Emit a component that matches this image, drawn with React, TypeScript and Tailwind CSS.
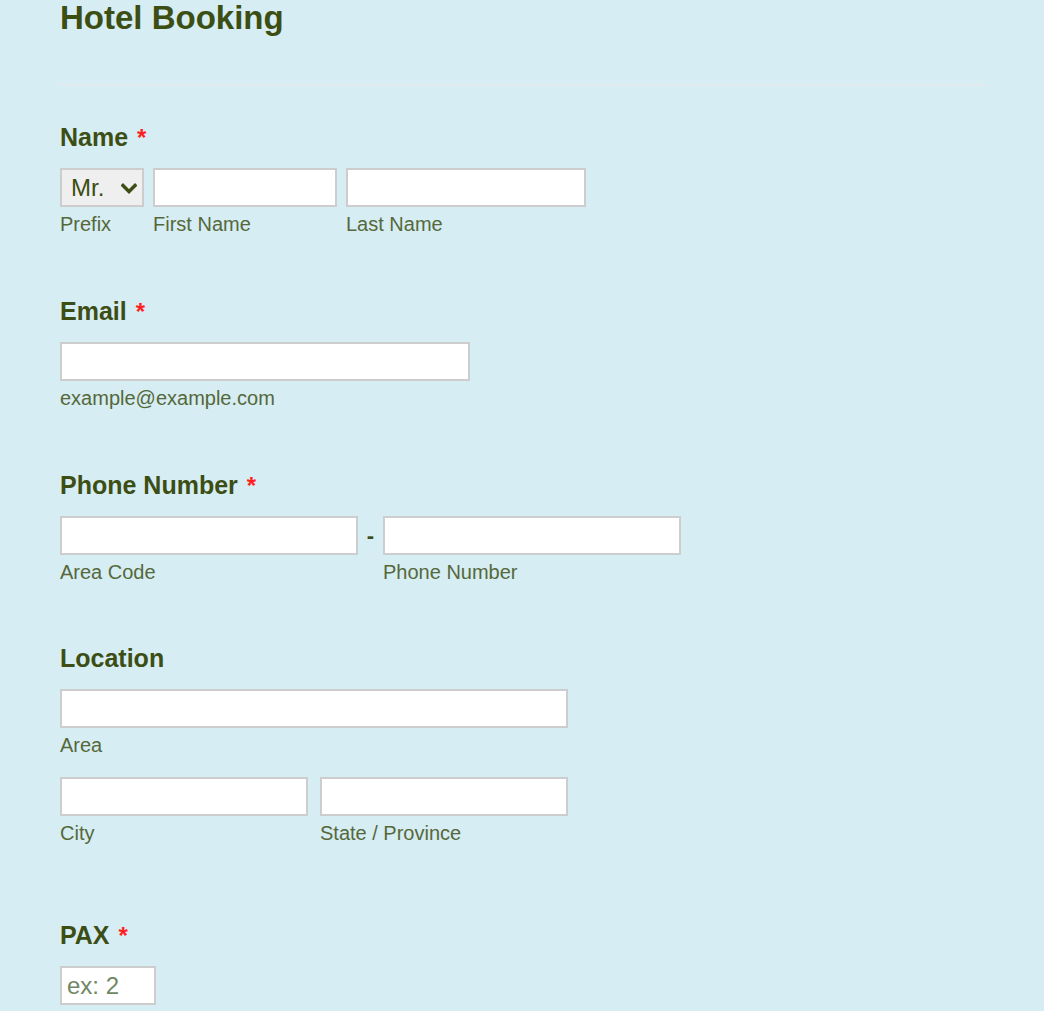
import { ReactNode } from "react";

const font = "font-['Liberation_Sans',Arial,sans-serif]";

const Label = ({ children, required }: { children: ReactNode; required?: boolean }) => (
  <div className="text-[25px] leading-[30px] font-bold text-[#3c4e14] whitespace-nowrap">
    {children}
    {required && <span className="text-[#ff1f1f] text-[24px] ml-[9px] align-top relative top-[1px]">*</span>}
  </div>
);

const Sub = ({ children }: { children: ReactNode }) => (
  <div className="mt-[5px] text-[20px] leading-[24px] text-[#56683a] whitespace-nowrap">{children}</div>
);

const Box = ({ className, placeholder }: { className: string; placeholder?: string }) => (
  <input
    placeholder={placeholder}
    className={`h-[39px] bg-white border-2 border-[#cdcdcd] px-[5px] text-[24px] text-[#3c4e14] placeholder:text-[#6f8763] outline-none ${className}`}
  />
);

const Field = ({ w, label, children }: { w: string; label: string; children?: ReactNode }) => (
  <div className={`flex flex-col ${w}`}>
    {children ?? <Box className="w-full" />}
    <Sub>{label}</Sub>
  </div>
);

export default function App() {
  return (
    <div className={`min-h-[1011px] w-full bg-[#d5edf3] ${font} overflow-hidden`}>
      <div className="pl-[60px] pr-[59px]">
        <h1 className="text-[33px] leading-[36px] font-bold text-[#3c4e14]">Hotel Booking</h1>
        <div className="mt-[48px] -ml-[2px] h-[2px] bg-[#e3eaed]" />

        {/* Name */}
        <div className="mt-[36px]">
          <Label required>Name</Label>
          <div className="mt-[16px] flex gap-[9px]">
            <Field w="w-[84px]" label="Prefix">
              <div className="h-[39px] bg-[#efefef] border-2 border-[#cdcdcd] flex items-center justify-between pl-[9px] pr-[5px]">
                <span className="text-[24px] text-[#3c4e14]">Mr.</span>
                <svg width="16" height="11" viewBox="0 0 16 11" className="mt-[2px]">
                  <path d="M2 2.5 L8 8.5 L14 2.5" fill="none" stroke="#3c4e14" strokeWidth="3.4" strokeLinecap="square" />
                </svg>
              </div>
            </Field>
            <Field w="w-[184px]" label="First Name" />
            <Field w="w-[240px]" label="Last Name" />
          </div>
        </div>

        {/* Email */}
        <div className="mt-[60px]">
          <Label required>Email</Label>
          <div className="mt-[16px]">
            <Field w="w-[410px]" label="example@example.com" />
          </div>
        </div>

        {/* Phone */}
        <div className="mt-[60px]">
          <Label required>Phone Number</Label>
          <div className="mt-[16px] flex">
            <Field w="w-[298px]" label="Area Code" />
            <div className="w-[25px] h-[39px] flex items-center justify-center text-[22px] font-bold text-[#3c4e14]">-</div>
            <Field w="w-[298px]" label="Phone Number" />
          </div>
        </div>

        {/* Location */}
        <div className="mt-[59px]">
          <Label>Location</Label>
          <div className="mt-[16px]">
            <Field w="w-[508px]" label="Area" />
          </div>
          <div className="mt-[20px] flex gap-[12px]">
            <Field w="w-[248px]" label="City" />
            <Field w="w-[248px]" label="State / Province" />
          </div>
        </div>

        {/* PAX */}
        <div className="mt-[75px]">
          <Label required>PAX</Label>
          <div className="mt-[16px]">
            <Box className="w-[96px]" placeholder="ex: 2" />
          </div>
        </div>
      </div>
    </div>
  );
}
